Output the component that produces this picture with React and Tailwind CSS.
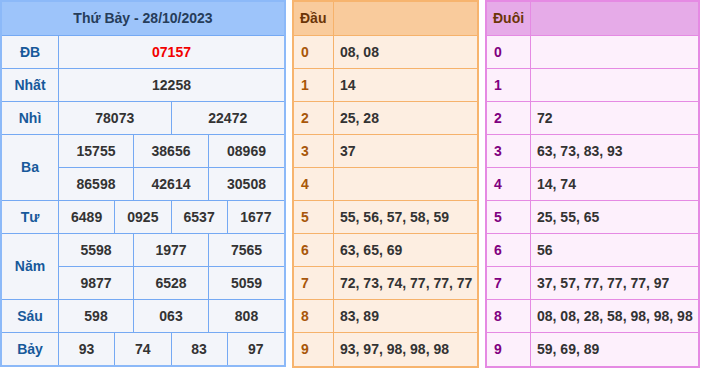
import React from 'react';

const prizes = [
  { label: 'ĐB', rows: [['07157']], red: true },
  { label: 'Nhất', rows: [['12258']] },
  { label: 'Nhì', rows: [['78073', '22472']] },
  { label: 'Ba', rows: [['15755', '38656', '08969'], ['86598', '42614', '30508']] },
  { label: 'Tư', rows: [['6489', '0925', '6537', '1677']] },
  { label: 'Năm', rows: [['5598', '1977', '7565'], ['9877', '6528', '5059']] },
  { label: 'Sáu', rows: [['598', '063', '808']] },
  { label: 'Bảy', rows: [['93', '74', '83', '97']] },
];

const dau = ['08, 08', '14', '25, 28', '37', '', '55, 56, 57, 58, 59', '63, 65, 69', '72, 73, 74, 77, 77, 77', '83, 89', '93, 97, 98, 98, 98'];
const duoi = ['', '', '72', '63, 73, 83, 93', '14, 74', '25, 55, 65', '56', '37, 57, 77, 77, 77, 97', '08, 08, 28, 58, 98, 98, 98', '59, 69, 89'];

const cols = {
  1: 'grid-cols-1',
  2: 'grid-cols-2',
  3: 'grid-cols-3',
  4: 'grid-cols-4',
};

const ResultTable = () => (
  <div className="w-[286px] shrink-0 border-2 border-[#8cb9f8] bg-[#f3f5fa]">
    <div className="h-[34px] flex items-center justify-center bg-[#9dc4fa] border-b border-[#75a9f3] text-[#263d5a]">
      Thứ Bảy - 28/10/2023
    </div>
    {prizes.map((p, i) => (
      <div
        key={p.label}
        className={`flex ${i < prizes.length - 1 ? 'border-b border-[#75a9f3]' : ''}`}
      >
        <div className="w-[57px] shrink-0 flex items-center justify-center border-r border-[#75a9f3] text-[#17599a]">
          {p.label}
        </div>
        <div className="flex-1">
          {p.rows.map((row, j) => (
            <div
              key={j}
              className={`grid ${cols[row.length]} divide-x divide-[#75a9f3] ${j > 0 ? 'h-[33px] border-t border-[#75a9f3]' : 'h-[32px]'}`}
            >
              {row.map((n, k) => (
                <div
                  key={k}
                  className={`flex items-center justify-center ${p.red ? 'text-[#f20000]' : 'text-[#333]'}`}
                >
                  {n}
                </div>
              ))}
            </div>
          ))}
        </div>
      </div>
    ))}
  </div>
);

const LotoTable = ({ title, data, width, labelW, theme }) => (
  <div className={`${width} shrink-0 border-2 ${theme.outer} ${theme.body}`}>
    <div className={`h-[34px] flex border-b ${theme.line} ${theme.head}`}>
      <div className={`${labelW} shrink-0 flex items-center pl-[6px] border-r ${theme.line} text-[#6b3508]`}>
        {title}
      </div>
      <div className="flex-1" />
    </div>
    {data.map((d, i) => (
      <div
        key={i}
        className={`h-[33px] flex ${i < data.length - 1 ? `border-b ${theme.line}` : 'h-[32px]'}`}
      >
        <div className={`${labelW} shrink-0 flex items-center pl-[7px] border-r ${theme.line} ${theme.label}`}>
          {i}
        </div>
        <div className="flex-1 flex items-center pl-[6px] text-[#333] whitespace-nowrap">{d}</div>
      </div>
    ))}
  </div>
);

export default function App() {
  return (
    <div className="w-[702px] h-[369px] bg-white flex items-start gap-[6px] font-['Liberation_Sans',Arial,sans-serif] text-[14px] font-bold">
      <ResultTable />
      <LotoTable
        title="Đầu"
        data={dau}
        width="w-[187px]"
        labelW="w-[40px]"
        theme={{
          outer: 'border-[#f7b46e]',
          line: 'border-[#f6b26b]',
          head: 'bg-[#f9cb9c]',
          body: 'bg-[#fdeee1]',
          label: 'text-[#a8570a]',
        }}
      />
      <LotoTable
        title="Đuôi"
        data={duoi}
        width="w-[215px]"
        labelW="w-[44px]"
        theme={{
          outer: 'border-[#e58ae3]',
          line: 'border-[#e58ae3]',
          head: 'bg-[#e6abe8]',
          body: 'bg-[#fdf0fc]',
          label: 'text-[#800080]',
        }}
      />
    </div>
  );
}
